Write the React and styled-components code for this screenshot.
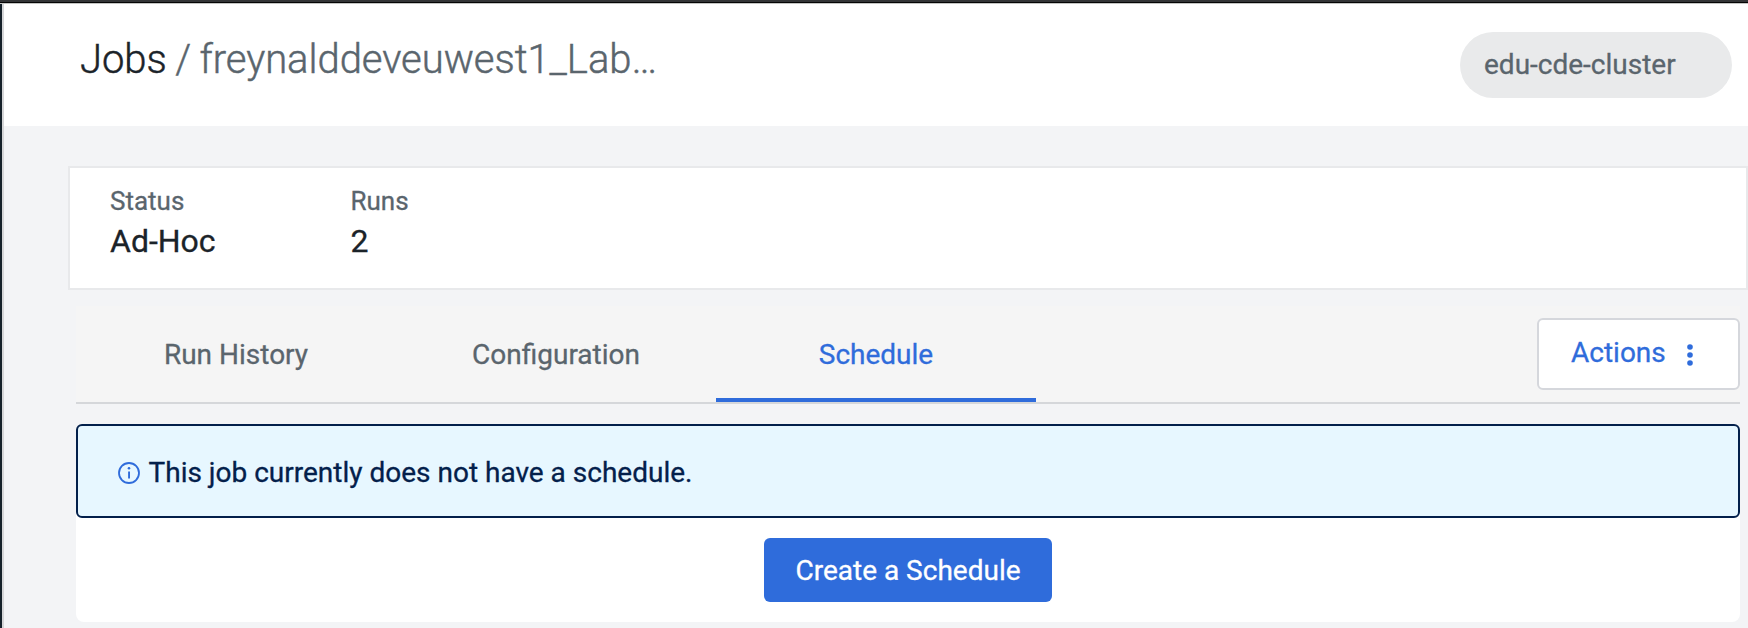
import React from "react";
import styled, { createGlobalStyle } from "styled-components";

const GlobalStyle = createGlobalStyle`
  * { box-sizing: border-box; }
  body {
    margin: 0;
    background: #f3f4f6;
    font-family: Roboto, "Liberation Sans", sans-serif;
    color: #1b2329;
    -webkit-text-stroke: 0.3px currentColor;
  }
`;

const Frame = styled.div`
  height: 628px;
  display: flex;
  flex-direction: column;
  overflow: hidden;
`;

const WindowEdge = styled.div`
  height: 4px;
  flex: none;
  background: linear-gradient(#333436 0 2px, #050505 2px 3px, #c4c5c3 3px 4px);
`;

const Body = styled.div`
  flex: 1;
  display: flex;
`;

const SideEdge = styled.div`
  width: 4px;
  flex: none;
  background: linear-gradient(90deg, #15212a 0 2px, #d5d6d8 2px 4px);
`;

const Page = styled.main`
  flex: 1;
  min-width: 0;
  display: flex;
  flex-direction: column;
`;

const Header = styled.header`
  height: 122px;
  flex: none;
  display: flex;
  justify-content: space-between;
  align-items: flex-start;
  padding: 28px 16px 0 76px;
  background: #fff;
`;

const Breadcrumb = styled.h1`
  margin: 4px 0 0;
  font-size: 40px;
  line-height: 47px;
  font-weight: 300;
  letter-spacing: -0.05px;
  word-spacing: -1.2px;
  color: #5a656d;
  -webkit-text-stroke-width: 0.45px;
  white-space: pre;
`;

const Crumb = styled.span`
  color: #1b2329;
  -webkit-text-stroke-color: #1b2329;
`;

const ClusterPill = styled.div`
  width: 272px;
  height: 66px;
  padding-left: 24px;
  border-radius: 33px;
  background: #e9eaeb;
  color: #5a656d;
  font-size: 28px;
  line-height: 65px;
`;

const Summary = styled.section`
  height: 124px;
  flex: none;
  margin: 40px 0 0 64px;
  padding: 17px 40px 0;
  display: flex;
  border: 2px solid #e8e9eb;
  background: #fff;
`;

const Stat = styled.div`
  width: 240.5px;
`;

const StatLabel = styled.div`
  font-size: 26px;
  line-height: 32px;
  color: #5a656d;
`;

const StatValue = styled.div`
  font-size: 32px;
  line-height: 40px;
  margin-top: 4px;
`;

const TabBar = styled.nav`
  height: 98px;
  flex: none;
  margin: 16px 8px 0 72px;
  display: flex;
  border-bottom: 2px solid #d5d7da;
  background: #f5f5f5;
`;

const Tab = styled.div`
  width: 320px;
  padding-top: 28px;
  text-align: center;
  font-size: 28px;
  line-height: 41px;
  color: ${(p) => (p.$active ? "#2f6cdb" : "#5a656d")};
  border-bottom: 4px solid ${(p) => (p.$active ? "#2f6cdb" : "transparent")};
`;

const ActionsButton = styled.button`
  width: 203px;
  height: 72px;
  margin: 12px 0 0 auto;
  padding: 0 0 3px 32px;
  display: flex;
  align-items: center;
  border: 2px solid #d5d7dc;
  border-radius: 6px;
  background: #fff;
  color: #2f6cdb;
  font: 28px Roboto, sans-serif;
`;

const DotsIcon = styled.svg`
  margin: 5px 0 0 21px;
`;

const Panel = styled.section`
  height: 198px;
  flex: none;
  margin: 20px 8px 0 72px;
  display: flex;
  flex-direction: column;
  align-items: center;
  border-radius: 8px;
  background: #fff;
`;

const Alert = styled.div`
  width: 100%;
  height: 94px;
  padding: 3px 0 0 40px;
  display: flex;
  align-items: center;
  border: 2px solid #03204b;
  border-radius: 6px;
  background: #e7f7ff;
  color: #03204b;
  font-size: 28px;
`;

const InfoIcon = styled.svg`
  margin: 1px 8.5px 0 0;
`;

const PrimaryButton = styled.button`
  width: 288px;
  height: 64px;
  margin-top: 20px;
  padding: 1px 0 0;
  border: 0;
  border-radius: 6px;
  background: #2f6cdb;
  color: #fff;
  font: 28px Roboto, sans-serif;
`;

const tabs = ["Run History", "Configuration", "Schedule"];
const stats = [
  { label: "Status", value: "Ad-Hoc" },
  { label: "Runs", value: "2" },
];

export default function App() {
  return (
    <Frame>
      <GlobalStyle />
      <WindowEdge />
      <Body>
        <SideEdge />
        <Page>
          <Header>
            <Breadcrumb>
              <Crumb>Jobs</Crumb> / freynalddeveuwest1_Lab…
            </Breadcrumb>
            <ClusterPill>edu-cde-cluster</ClusterPill>
          </Header>
          <Summary>
            {stats.map((s) => (
              <Stat key={s.label}>
                <StatLabel>{s.label}</StatLabel>
                <StatValue>{s.value}</StatValue>
              </Stat>
            ))}
          </Summary>
          <TabBar>
            {tabs.map((t) => (
              <Tab key={t} $active={t === "Schedule"}>{t}</Tab>
            ))}
            <ActionsButton>
              Actions
              <DotsIcon width="6" height="22" viewBox="0 0 6 22" fill="currentColor">
                <circle cx="3" cy="3" r="2.8" />
                <circle cx="3" cy="11" r="2.8" />
                <circle cx="3" cy="19" r="2.8" />
              </DotsIcon>
            </ActionsButton>
          </TabBar>
          <Panel>
            <Alert>
              <InfoIcon width="22" height="22" viewBox="0 0 22 22" fill="none">
                <circle cx="11" cy="11" r="10" stroke="#2f6cdb" strokeWidth="1.8" />
                <rect x="10.1" y="9.5" width="1.9" height="7" fill="#2f6cdb" />
                <circle cx="11" cy="6.3" r="1.3" fill="#2f6cdb" />
              </InfoIcon>
              This job currently does not have a schedule.
            </Alert>
            <PrimaryButton>Create a Schedule</PrimaryButton>
          </Panel>
        </Page>
      </Body>
    </Frame>
  );
}
